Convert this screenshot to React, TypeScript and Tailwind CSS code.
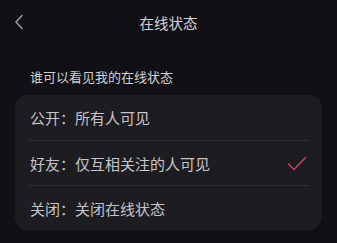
const OPTIONS = [
  { label: '公开：所有人可见', checked: false },
  { label: '好友：仅互相关注的人可见', checked: true },
  { label: '关闭：关闭在线状态', checked: false },
];

export default function App() {
  return (
    <div
      className="w-[337px] h-[243px] bg-[#111115] text-[#c9c9cd] overflow-hidden"
      style={{ fontFamily: '"Noto Sans CJK SC", "Noto Sans", sans-serif' }}
    >
      {/* header */}
      <div className="relative h-[46px] flex items-center justify-center">
        <svg className="absolute left-[14px] top-[14px]" width="10" height="16" viewBox="0 0 10 16" fill="none">
          <path d="M8 1.5 L2 8 L8 14.5" stroke="#9a9a9e" strokeWidth="1.6" strokeLinecap="round" strokeLinejoin="round" />
        </svg>
        <span className="text-[14.5px] leading-none text-[#d2d2d6]">在线状态</span>
      </div>

      <div className="mt-[22px] pl-[30px] text-[13px] leading-[18px] text-[#cfcfd3]">谁可以看见我的在线状态</div>

      <div className="mt-[9px] mx-[15px] rounded-[13px] bg-[#1c1c21] px-[13px]">
        {OPTIONS.map((o, i) => (
          <div
            key={o.label}
            className={`h-[45px] flex items-center justify-between pl-[2px] ${i > 0 ? 'border-t border-[#2c2c32]' : ''}`}
          >
            <span className="text-[15px] leading-none text-[#c4c4c8]">{o.label}</span>
            {o.checked && (
              <svg className="mr-[2px]" width="20" height="15" viewBox="0 0 20 15" fill="none">
                <path d="M1.5 8 L7 13.5 L18.5 1.5" stroke="#c93a62" strokeWidth="1.6" strokeLinecap="round" strokeLinejoin="round" />
              </svg>
            )}
          </div>
        ))}
      </div>
    </div>
  );
}
